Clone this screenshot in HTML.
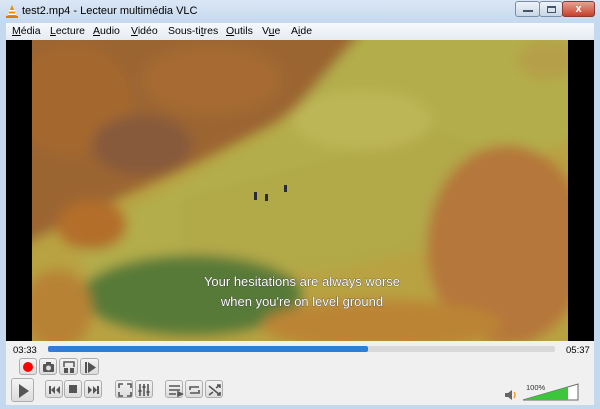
<!DOCTYPE html>
<html><head><meta charset="utf-8"><style>
*{margin:0;padding:0;box-sizing:border-box}
body{width:600px;height:409px;overflow:hidden;background:#c5d9ee;font-family:"Liberation Sans",sans-serif;position:relative}
.abs{position:absolute}
.title{left:22px;top:5px;font-size:11px;color:#000}
.menu{left:6px;top:23px;width:588px;height:17px;background:linear-gradient(#f7f9fc,#e6ebf2);font-size:10.5px}
.menu span{position:absolute;top:2px}
.menu u{text-decoration:underline}
.ctrl{left:6px;top:341px;width:588px;height:64px;background:#f0f0f0}
.btn{position:absolute;border:1px solid #adadad;border-radius:3px;background:linear-gradient(#f4f4f4,#dcdcdc)}
.btn svg{position:absolute;left:0;top:0}
</style></head><body>
<div class="abs" style="left:0;top:0;width:600px;height:23px;background:linear-gradient(#dbe7f5,#c5d8ee)"></div>
<svg class="abs" style="left:5px;top:4px" width="14" height="14"><polygon points="7,1 12,13 2,13" fill="#f28a00"/><rect x="4" y="6" width="6" height="1.5" fill="#fff"/><rect x="3" y="9.5" width="8" height="1.5" fill="#fff"/><rect x="1" y="12" width="12" height="2" fill="#e67700"/></svg>
<div class="abs title">test2.mp4 - Lecteur multimédia VLC</div>
<div class="abs" style="left:515px;top:1px;width:25px;height:16px;border:1px solid #7c8ea4;border-radius:3px;background:linear-gradient(#eef3fa,#c9d6e6)"><div style="margin:8px 7px 0;width:10px;height:2px;background:#44546a"></div></div>
<div class="abs" style="left:539px;top:1px;width:24px;height:16px;border:1px solid #7c8ea4;border-radius:3px;background:linear-gradient(#eef3fa,#c9d6e6)"><div style="margin:4px 7px;width:9px;height:7px;border:1px solid #44546a;border-top-width:2px"></div></div>
<div class="abs" style="left:562px;top:1px;width:33px;height:16px;border:1px solid #8a3a30;border-radius:3px;background:linear-gradient(#e8a193,#c5412b);color:#fff;font-size:11px;font-weight:bold;text-align:center;line-height:14px">x</div>
<div class="abs menu">
<span style="left:6px"><u>M</u>édia</span><span style="left:44px"><u>L</u>ecture</span><span style="left:87px"><u>A</u>udio</span><span style="left:125px"><u>V</u>idéo</span><span style="left:162px">Sous-ti<u>t</u>res</span><span style="left:220px"><u>O</u>utils</span><span style="left:256px">V<u>u</u>e</span><span style="left:285px">A<u>i</u>de</span>
</div>
<div class="abs" style="left:6px;top:40px;width:588px;height:302px;background:#000"></div>
<svg class="abs" style="left:32px;top:40px" width="536" height="302" viewBox="0 0 536 302">
<defs><filter id="b"><feGaussianBlur stdDeviation="6"/></filter></defs>
<rect width="536" height="302" fill="#b9a242"/>
<g filter="url(#b)">
<polygon points="-20,-20 340,-20 320,30 240,85 160,125 60,170 -20,210" fill="#9b6530"/>
<polygon points="340,-20 560,-20 560,90 470,130 380,170 300,210 200,240 60,240 40,200 170,130 250,85" fill="#b3ad4c"/>
<polygon points="150,160 300,120 400,90 460,110 430,200 300,230 150,240" fill="#b2a94a"/>
<ellipse cx="40" cy="60" rx="60" ry="55" fill="#a4682e"/>
<ellipse cx="180" cy="40" rx="70" ry="35" fill="#a66b30"/>
<ellipse cx="110" cy="105" rx="50" ry="30" fill="#875a3a"/>
<ellipse cx="60" cy="185" rx="35" ry="25" fill="#b36e2c"/>
<ellipse cx="160" cy="255" rx="110" ry="40" fill="#587a38"/>
<ellipse cx="25" cy="270" rx="35" ry="40" fill="#b88236"/>
<ellipse cx="475" cy="205" rx="80" ry="100" fill="#b5773a"/>
<ellipse cx="350" cy="285" rx="120" ry="25" fill="#bb8436"/>
<ellipse cx="515" cy="20" rx="30" ry="20" fill="#b5a04a"/>
<ellipse cx="330" cy="80" rx="70" ry="30" fill="#bdb656"/>
</g>
<g fill="#2a2a3a"><rect x="222" y="152" width="3" height="8"/><rect x="233" y="154" width="3" height="7"/><rect x="252" y="145" width="3" height="7"/></g>
<g font-family="Liberation Sans,sans-serif" font-size="13" fill="#fff" stroke="#333" stroke-width="0.6" paint-order="stroke" text-anchor="middle">
<text x="270" y="246">Your hesitations are always worse</text>
<text x="270" y="266">when you're on level ground</text></g>
</svg>
<div class="abs ctrl"></div>
<div class="abs" style="left:13px;top:345px;font-size:9.5px">03:33</div>
<div class="abs" style="left:48px;top:346px;width:507px;height:6px;background:#d9d9d9;border-radius:2px"></div>
<div class="abs" style="left:48px;top:346px;width:320px;height:6px;background:#2e7fd4;border-radius:2px"></div>
<div class="abs" style="left:566px;top:345px;font-size:9.5px">05:37</div>
<div class="btn" style="left:19px;top:358px;width:18px;height:17px"><div style="margin:3px;width:10px;height:10px;border-radius:50%;background:#f00"></div></div>
<div class="btn" style="left:39px;top:358px;width:18px;height:17px"><svg width="18" height="17"><rect x="3" y="5" width="11" height="8" rx="1" fill="#555"/><rect x="6" y="3" width="5" height="3" fill="#555"/><circle cx="8.5" cy="9" r="2.5" fill="#ddd"/></svg></div>
<div class="btn" style="left:59px;top:358px;width:19px;height:17px"><svg width="19" height="17"><path d="M4 8V3h10v5" fill="none" stroke="#555" stroke-width="1.5"/><rect x="4" y="9" width="4" height="5" fill="#555"/><rect x="10" y="9" width="4" height="5" fill="#555"/></svg></div>
<div class="btn" style="left:80px;top:358px;width:19px;height:17px"><svg width="19" height="17"><rect x="4" y="3" width="2" height="11" fill="#555"/><polygon points="7,3 15,8.5 7,14" fill="#555"/></svg></div>
<div class="btn" style="left:11px;top:378px;width:23px;height:24px"><svg width="23" height="24"><polygon points="7,5 17,12 7,19" fill="#555"/></svg></div>
<div class="btn" style="left:45px;top:380px;width:18px;height:18px"><svg width="18" height="18"><rect x="3" y="5" width="2" height="8" fill="#555"/><polygon points="9,5 5,9 9,13" fill="#555"/><polygon points="14,5 10,9 14,13" fill="#555"/></svg></div>
<div class="btn" style="left:64px;top:380px;width:18px;height:18px"><div style="margin:4px;width:8px;height:8px;background:#555"></div></div>
<div class="btn" style="left:84px;top:380px;width:18px;height:18px"><svg width="18" height="18"><polygon points="3,5 7,9 3,13" fill="#555"/><polygon points="8,5 12,9 8,13" fill="#555"/><rect x="12" y="5" width="2" height="8" fill="#555"/></svg></div>
<div class="btn" style="left:115px;top:380px;width:18px;height:18px"><svg width="18" height="18" fill="none" stroke="#555" stroke-width="1.6"><path d="M3 7V3h4M11 3h4v4M15 11v4h-4M7 15H3v-4"/></svg></div>
<div class="btn" style="left:135px;top:380px;width:18px;height:18px"><svg width="18" height="18" stroke="#555" stroke-width="1.6"><path d="M4 3v12M8 3v12M12 3v12"/><path d="M2.5 10h3M6.5 6h3M10.5 11h3" stroke-width="2"/></svg></div>
<div class="btn" style="left:165px;top:380px;width:18px;height:18px"><svg width="18" height="18" stroke="#555" stroke-width="1.6"><path d="M3 5h11M3 9h11M3 13h7"/><polygon points="12,11 16,13 12,15" fill="#555"/></svg></div>
<div class="btn" style="left:185px;top:380px;width:18px;height:18px"><svg width="18" height="18" fill="none" stroke="#555" stroke-width="1.6"><path d="M4 9V6h9M4 12h9V9"/></svg></div>
<div class="btn" style="left:205px;top:380px;width:18px;height:18px"><svg width="18" height="18" fill="none" stroke="#555" stroke-width="1.6"><path d="M3 5l11 9M3 14l4-3M10 7l4-3M11 4h3v3M11 14h3v-3"/></svg></div>
<svg class="abs" style="left:504px;top:389px" width="14" height="12"><rect x="1" y="4" width="3" height="4" fill="#666"/><polygon points="4,4 8,1 8,11 4,8" fill="#666"/><path d="M10 3q2 3 0 6" stroke="#f0a030" stroke-width="1.5" fill="none"/></svg>
<div class="abs" style="left:526px;top:383px;font-size:7.5px;color:#333">100%</div>
<svg class="abs" style="left:522px;top:383px" width="58" height="18"><polygon points="1,17 56,1 56,17" fill="#fff" stroke="#666"/><polygon points="1,17 46,4 46,17" fill="#3cc63c"/></svg>
</body></html>
